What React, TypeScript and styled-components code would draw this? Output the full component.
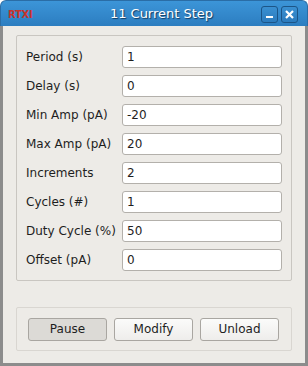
import React from 'react'
import styled, { createGlobalStyle } from 'styled-components'

const GlobalStyle = createGlobalStyle`
  html, body {
    margin: 0;
    padding: 0;
    background: #ffffff;
  }
  body {
    font-family: 'DejaVu Sans', 'Liberation Sans', sans-serif;
    font-size: 12px;
  }
`

const Window = styled.div`
  width: 308px;
  height: 366px;
  display: flex;
  flex-direction: column;
  box-sizing: border-box;
`

const TitleBar = styled.div`
  height: 26px;
  flex: none;
  display: flex;
  align-items: center;
  padding: 0 7px 0 7px;
  border-radius: 6px 6px 0 0;
  background: linear-gradient(#3c95d8, #2c7dc0);
  border: 1px solid #2a6da6;
  border-bottom: none;
  box-sizing: border-box;
`

const Logo = styled.span`
  font-family: 'DejaVu Sans', sans-serif;
  font-size: 10px;
  font-weight: bold;
  color: #c9332b;
  letter-spacing: -0.3px;
  width: 40px;
  margin-top: 2px;
`

const Title = styled.span`
  flex: 1;
  text-align: center;
  color: #ffffff;
  font-size: 13px;
  text-shadow: 1px 1px 1px #123a5e;
  margin-left: 14px;
`

const WinButtons = styled.div`
  display: flex;
  gap: 3px;
  margin-top: 2px;
  margin-right: 2px;
`

const WinButton = styled.div`
  width: 17px;
  height: 17px;
  border: 1px solid #1c5587;
  border-radius: 3px;
  box-sizing: border-box;
  display: flex;
  align-items: center;
  justify-content: center;
  background: linear-gradient(#3a90d2, #2c7bbd);
`

const Body = styled.div`
  flex: 1;
  background: #edebe7;
  border: 3px solid #8c8c8c;
  border-top: none;
  padding: 9px 13px 12px 13px;
  display: flex;
  flex-direction: column;
  gap: 26px;
`

const GroupBox = styled.div`
  border: 1px solid #c9c6c1;
  border-radius: 2px;
  padding: 10px 9px 9px 9px;
  display: flex;
  flex-direction: column;
  gap: 7px;
`

const Row = styled.div`
  display: flex;
  align-items: center;
  height: 22px;
`

const Label = styled.label`
  width: 96px;
  color: #1e1e1e;
  font-size: 12px;
`

const Field = styled.div`
  width: 160px;
  height: 22px;
  box-sizing: border-box;
  background: #ffffff;
  border: 1px solid #b3b0ab;
  border-radius: 3px;
  padding: 0 4px;
  display: flex;
  align-items: center;
  color: #1e1e1e;
  font-size: 12px;
`

const ButtonBox = styled.div`
  border: 1px solid #d9d6d1;
  border-radius: 2px;
  height: 44px;
  box-sizing: border-box;
  padding: 0 12px 0 11px;
  display: flex;
  align-items: center;
  gap: 7px;
`

const Button = styled.div<{ $pressed?: boolean }>`
  width: 79px;
  height: 23px;
  box-sizing: border-box;
  border: 1px solid #a9a6a1;
  border-radius: 3px;
  display: flex;
  align-items: center;
  justify-content: center;
  color: #1e1e1e;
  font-size: 12px;
  background: ${(p) =>
    p.$pressed ? '#dcdad6' : 'linear-gradient(#fbfbfa, #eeedeb)'};
`

const fields = [
  ['Period (s)', '1'],
  ['Delay (s)', '0'],
  ['Min Amp (pA)', '-20'],
  ['Max Amp (pA)', '20'],
  ['Increments', '2'],
  ['Cycles (#)', '1'],
  ['Duty Cycle (%)', '50'],
  ['Offset (pA)', '0'],
]

const App = () => {
  return (
    <Window>
      <GlobalStyle />
      <TitleBar>
        <Logo>RTXI</Logo>
        <Title>11 Current Step</Title>
        <WinButtons>
          <WinButton>
            <svg width="9" height="9" viewBox="0 0 9 9">
              <rect x="1" y="6" width="7" height="2" fill="#ffffff" />
            </svg>
          </WinButton>
          <WinButton>
            <svg width="11" height="11" viewBox="0 0 11 11">
              <path d="M2 2 L9 9 M9 2 L2 9" stroke="#ffffff" strokeWidth="2.2" />
            </svg>
          </WinButton>
        </WinButtons>
      </TitleBar>
      <Body>
        <GroupBox>
          {fields.map(([label, value]) => (
            <Row key={label}>
              <Label>{label}</Label>
              <Field>{value}</Field>
            </Row>
          ))}
        </GroupBox>
        <ButtonBox>
          <Button $pressed>Pause</Button>
          <Button>Modify</Button>
          <Button>Unload</Button>
        </ButtonBox>
      </Body>
    </Window>
  )
}

export default App
